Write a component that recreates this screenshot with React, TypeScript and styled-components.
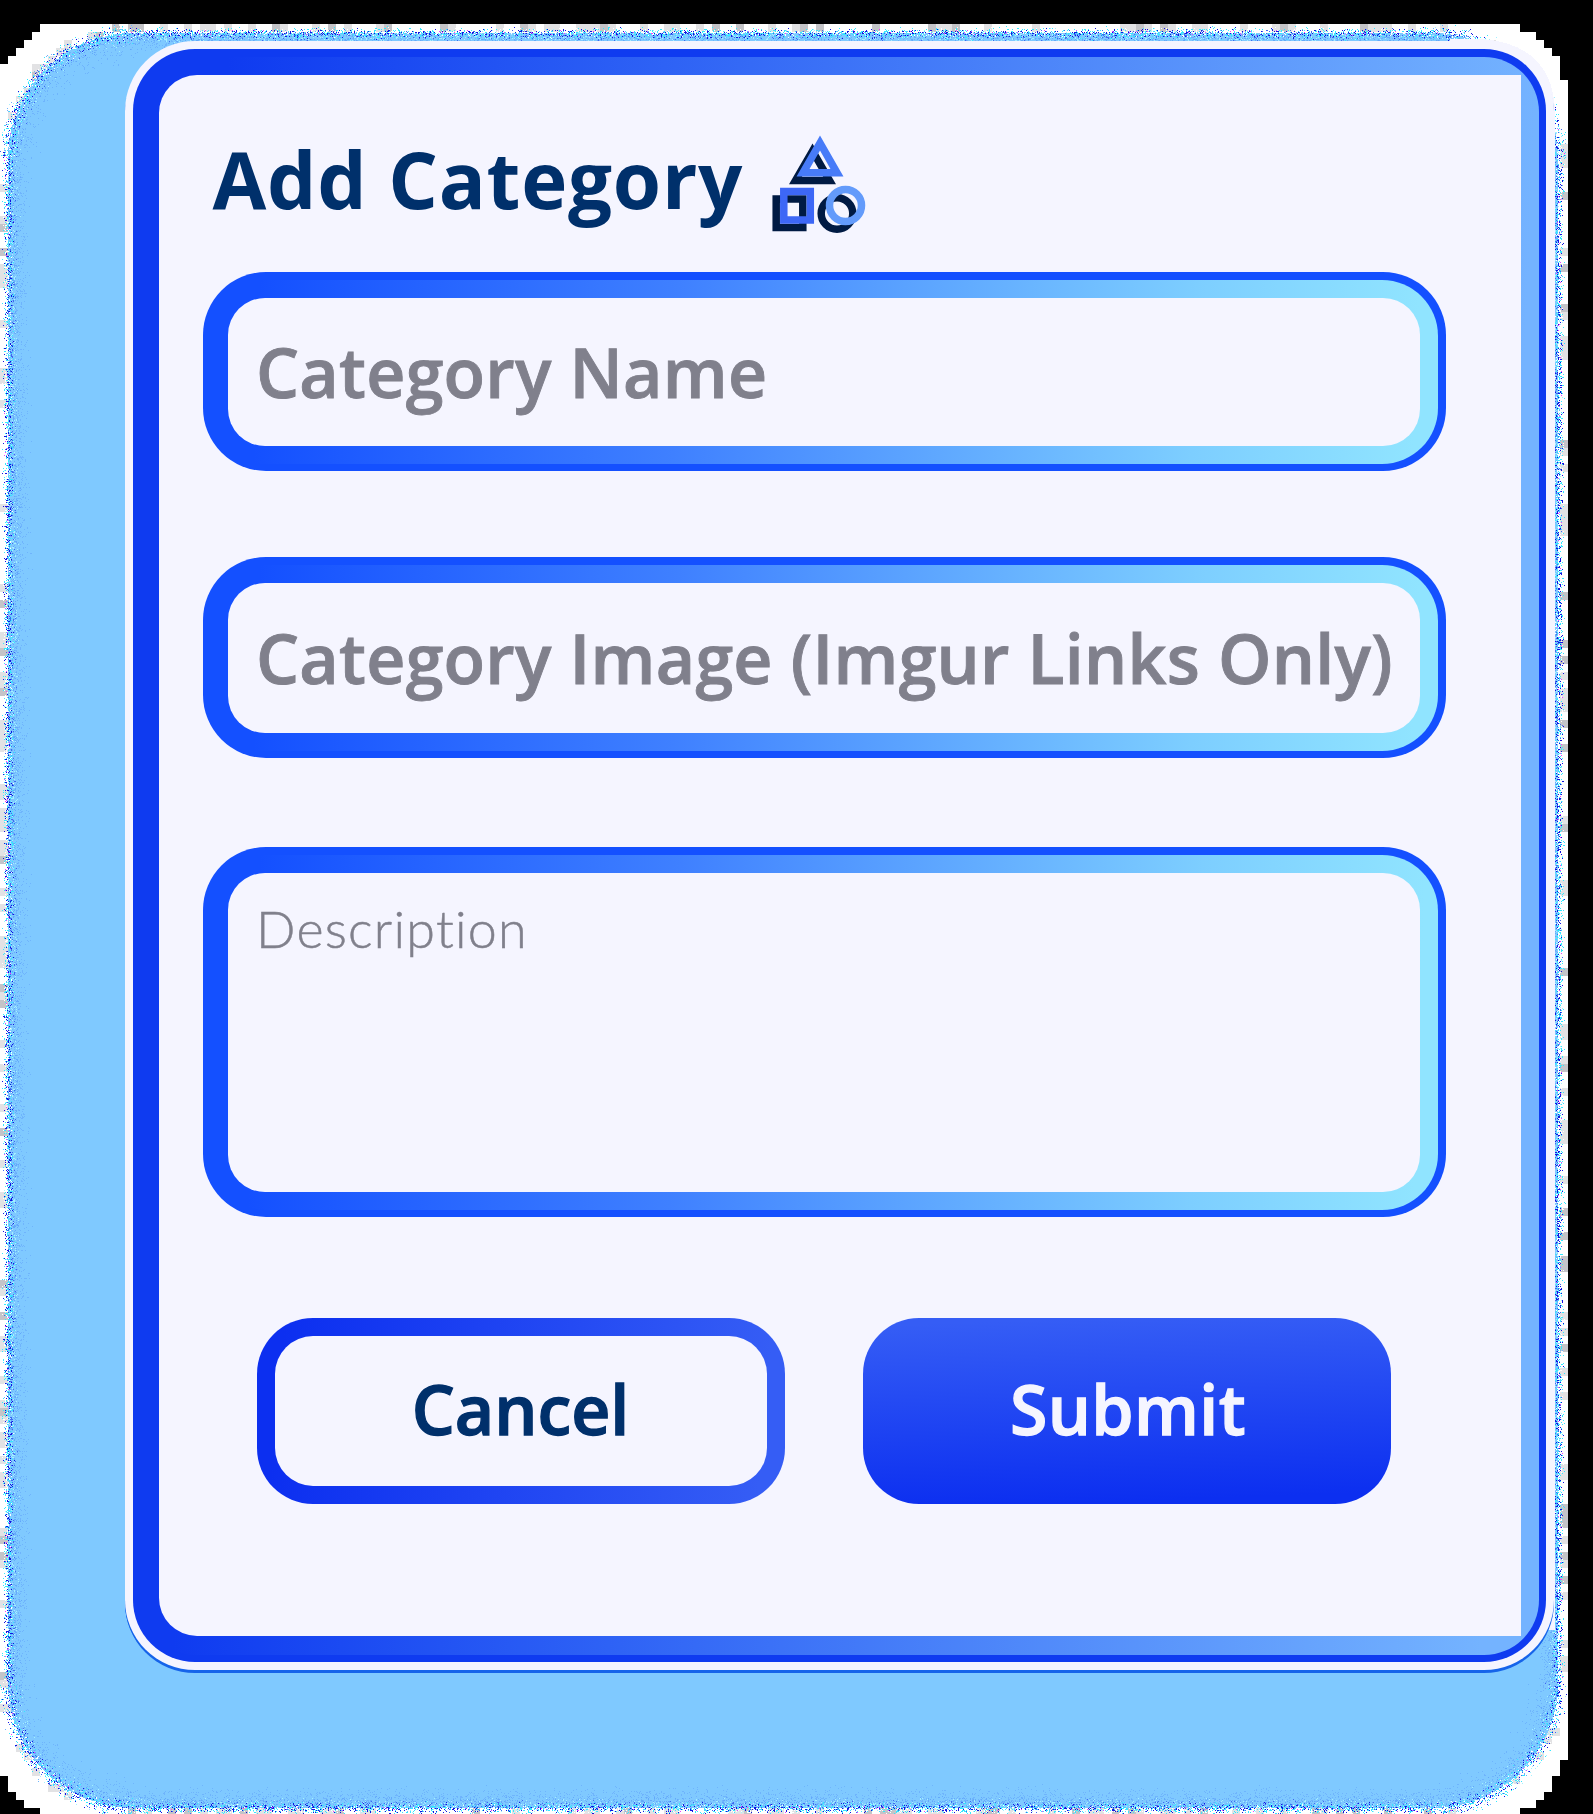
import React from 'react';
import styled, { createGlobalStyle } from 'styled-components';

const Global = createGlobalStyle`
  * { box-sizing: border-box; }
  body { margin: 0; background: #000; font-family: 'Open Sans', 'Noto Sans', sans-serif; }
  #root { height: 1814px; overflow: hidden; }
`;

/* Backdrop and card share one grid cell, so the card sits on the glow. */
const Stage = styled.main`
  display: grid;
  width: 1593px;
  height: 1814px;
  overflow: hidden;
  > * { grid-area: 1 / 1; }
`;

const Backdrop = styled.svg`
  display: block;
  width: 1593px;
  height: 1814px;
`;

const Card = styled.form`
  margin: 49px 0 0 133px;
  width: 1413px;
  height: 1613px;
  padding: 7.5px;
  border-radius: 62px;
  background: #0f3bf0;
  box-shadow: 0 0 0 8px #f5f5ff, -2px 3px 0 6px #1664ea, 0 3px 0 8px #1664ea;
`;

const CardRim = styled.div`
  height: 100%;
  padding: 18.5px 18px;
  border-radius: 55px;
  background: linear-gradient(92deg, #0f3bf0 6%, #2e62f5 36%, #74b3ff 96%);
`;

const CardBody = styled.div`
  height: 100%;
  padding: 59px 0 0 44px;
  border-radius: 38px 0 0 38px;
  background: #f5f5ff;
`;

const Heading = styled.h1`
  display: flex;
  align-items: center;
  justify-content: space-between;
  margin: 0 0 0 10px;
  width: 659px;
  height: 95px;
  color: #00306b;
  font-size: 78px;
  font-weight: 700;
  letter-spacing: 0.75px;
  line-height: 95px;
  white-space: nowrap;
`;

const HeadingText = styled.span`
  position: relative;
  top: -2px;
`;

const ShapesIcon = styled.svg`
  flex: none;
  width: 100px;
  height: 105px;
  margin-top: 7px;
`;

const Fields = styled.div`
  display: flex;
  flex-direction: column;
  gap: 86px;
  margin-top: 43px;
  width: 1243px;
`;

const Frame = styled.label<{ $height: number }>`
  display: block;
  height: ${p => p.$height}px;
  padding: 7.5px;
  border-radius: 63px;
  background: #1450ff;
  &:last-child { margin-top: 3px; }
`;

const FrameRim = styled.span`
  display: block;
  height: 100%;
  padding: 18px;
  border-radius: 56px;
  background: linear-gradient(92deg, #1450ff 4%, #3f80ff 38%, #7dceff 80%, #90e4ff 98%);
`;

const inputLook = `
  display: block;
  width: 100%;
  height: 100%;
  margin: 0;
  border: 0;
  outline: 0;
  border-radius: 37px;
  background: #f5f5ff;
  resize: none;
  color: #00306b;
`;

const TextInput = styled.input`
  ${inputLook}
  padding: 0 0 0 28px;
  font: 600 68px 'Open Sans', 'Noto Sans', sans-serif;
  letter-spacing: 0.26px;
  &::placeholder {
    color: #80808c;
    opacity: 1;
    -webkit-text-stroke: 0.9px #80808c;
  }
`;

const TextArea = styled.textarea`
  ${inputLook}
  padding: 24px 28px;
  overflow: hidden;
  font: 300 52px/62px Lato, sans-serif;
  letter-spacing: 1.25px;
  &::placeholder {
    color: #80808c;
    opacity: 1;
    -webkit-text-stroke: 0.5px #80808c;
  }
`;

const Actions = styled.div`
  display: flex;
  gap: 78px;
  margin: 101px 0 0 54px;
`;

const Button = styled.button<{ $primary?: boolean }>`
  width: 528px;
  height: 186px;
  padding: 0 0 5px ${p => (p.$primary ? '3px' : '0')};
  border: 18px solid transparent;
  border-radius: 56px;
  font: 600 68px 'Open Sans', 'Noto Sans', sans-serif;
  letter-spacing: ${p => (p.$primary ? '0.4px' : '0')};
  -webkit-text-stroke: 1.3px currentColor;
  color: ${p => (p.$primary ? '#f5f5ff' : '#00306b')};
  background: ${p =>
    p.$primary
      ? 'linear-gradient(178deg, #355df5 4%, #0c2ff0 94%) border-box'
      : 'linear-gradient(#f5f5ff, #f5f5ff) padding-box, linear-gradient(95deg, #0c2ff0 5%, #355df5 95%) border-box'};
`;

/* Seeded generator keeps the grain identical on every render. */
function makeRandom(seed: number) {
  let s = seed;
  return () => {
    s = (s + 0x6d2b79f5) | 0;
    let t = Math.imul(s ^ (s >>> 15), 1 | s);
    t = (t + Math.imul(t ^ (t >>> 7), 61 | t)) ^ t;
    return ((t ^ (t >>> 14)) >>> 0) / 4294967296;
  };
}

/* Point and inward normal on the rounded outline of the glow. */
const BOX = { l: 8, t: 33, r: 1558, b: 1808, rad: 125 };
function outline(u: number) {
  const { l, t, r, b, rad } = BOX;
  const w = r - l - 2 * rad;
  const h = b - t - 2 * rad;
  const arc = (Math.PI * rad) / 2;
  let d = u * (2 * w + 2 * h + 4 * arc);
  const corner = (cx: number, cy: number, a: number) => {
    const q = a + d / rad;
    return [cx + rad * Math.cos(q), cy + rad * Math.sin(q), -Math.cos(q), -Math.sin(q)];
  };
  if (d < w) return [l + rad + d, t, 0, 1];
  d -= w;
  if (d < arc) return corner(r - rad, t + rad, -Math.PI / 2);
  d -= arc;
  if (d < h) return [r, t + rad + d, -1, 0];
  d -= h;
  if (d < arc) return corner(r - rad, b - rad, 0);
  d -= arc;
  if (d < w) return [r - rad - d, b, 0, -1];
  d -= w;
  if (d < arc) return corner(l + rad, b - rad, Math.PI / 2);
  d -= arc;
  if (d < h) return [l, b - rad - d, 1, 0];
  d -= h;
  return corner(l + rad, t + rad, Math.PI);
}

function grain(seed: number, count: number, center: number, spread: number) {
  const rnd = makeRandom(seed);
  let d = '';
  for (let i = 0; i < count; i++) {
    const [x, y, nx, ny] = outline(rnd());
    const corner = nx !== 0 && ny !== 0 ? 1.7 : 1;
    const off = center + (rnd() + rnd() + rnd() - 1.5) * spread * corner;
    d += `M${Math.round(x + nx * off)} ${Math.round(y + ny * off)}h1v1h-1z`;
  }
  return d;
}

function blocks(seed: number, count: number) {
  const rnd = makeRandom(seed);
  let d = '';
  for (let i = 0; i < count; i++) {
    const [x, y, nx, ny] = outline(rnd());
    const bx = Math.floor((x - nx * 3) / 8) * 8;
    const by = Math.floor((y - ny * 3) / 8) * 8;
    d += `M${bx} ${by}h8v8h-8z`;
  }
  return d;
}

const HALO =
  'M40 24H1520V32H1536V40H1544V48H1552V56H1560V80H1568V1760H1560V1776H1552V1792H1544V1800H1536V1808H1520V1814H40V1808H24V1800H16V1792H8V1776H0V64H8V56H16V48H24V40H32V32H40Z';

const layers = [
  { fill: '#e2e2e4', d: blocks(3, 280) },
  { fill: '#c4c4c8', d: blocks(8, 90) },
];
const baseSpecks = [
  { fill: '#6fb4fc', d: grain(11, 14000, 10, 10) },
  { fill: '#63a8fa', d: grain(17, 7000, 6, 5) },
];
const edgeSpecks = [
  { fill: '#a4f0ff', d: grain(23, 7000, 3, 6) },
  { fill: '#ffffff', d: grain(31, 8000, -1, 4) },
  { fill: '#35e8ff', d: grain(47, 11000, 0, 5) },
  { fill: '#4068f0', d: grain(53, 4500, 2, 5) },
  { fill: '#1212e0', d: grain(61, 5500, 0, 4.5) },
  { fill: '#f03cff', d: grain(79, 400, -1, 3) },
];

function Glow() {
  return (
    <Backdrop viewBox="0 0 1593 1814" shapeRendering="crispEdges" aria-hidden="true">
      <clipPath id="halo">
        <path d={HALO} />
      </clipPath>
      <g clipPath="url(#halo)">
        <path fill="#fff" d={HALO} />
        {layers.map(p => <path key={p.fill} fill={p.fill} d={p.d} />)}
        <rect x="8" y="33" width="1550" height="1775" rx="125" fill="#7fc9ff" />
        {baseSpecks.map(p => <path key={p.fill} fill={p.fill} d={p.d} />)}
        {edgeSpecks.map(p => <path key={p.fill} fill={p.fill} d={p.d} />)}
        <path fill="#f5f5ff" d="M1450 39H1484Q1555 46 1555 115V1630H1500Z" />
      </g>
    </Backdrop>
  );
}

function Shapes() {
  return (
    <ShapesIcon viewBox="0 0 100 105" fill="none" strokeWidth="7.5">
      <g stroke="#001a43">
        <path d="M40.500 18 23.500 47.500H57.500Z" />
        <path d="M4.200 66H30.800V94.500H4.200Z" />
        <circle cx="65" cy="80.500" r="15.800" />
      </g>
      <path stroke="#477bf8" d="M48 10 31 39.800H65Z" />
      <path stroke="#3d67f6" d="M11.800 58.500H38.300V87H11.800Z" />
      <circle cx="73.500" cy="72.500" r="16" stroke="#639bfb" />
    </ShapesIcon>
  );
}

export default function App() {
  return (
    <>
      <Global />
      <Stage>
        <Glow />
        <Card onSubmit={e => e.preventDefault()}>
          <CardRim>
            <CardBody>
              <Heading>
                <HeadingText>Add Category</HeadingText>
                <Shapes />
              </Heading>
              <Fields>
                <Frame $height={199}>
                  <FrameRim><TextInput placeholder="Category Name" /></FrameRim>
                </Frame>
                <Frame $height={201}>
                  <FrameRim><TextInput placeholder="Category Image (Imgur Links Only)" /></FrameRim>
                </Frame>
                <Frame $height={370}>
                  <FrameRim><TextArea placeholder="Description" /></FrameRim>
                </Frame>
              </Fields>
              <Actions>
                <Button type="button">Cancel</Button>
                <Button type="submit" $primary>Submit</Button>
              </Actions>
            </CardBody>
          </CardRim>
        </Card>
      </Stage>
    </>
  );
}
